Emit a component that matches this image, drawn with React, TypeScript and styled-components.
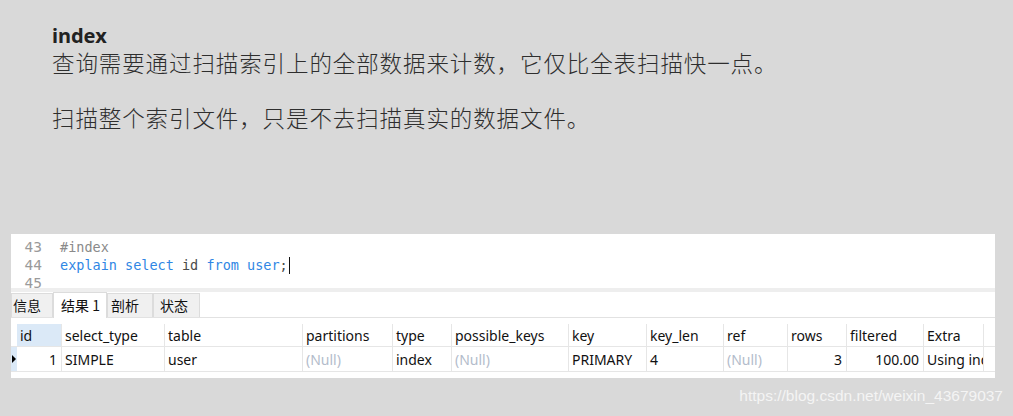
import React from "react";
import styled, { createGlobalStyle } from "styled-components";

const GlobalStyle = createGlobalStyle`
  html, body { margin: 0; padding: 0; background: #d9d9d9; }
  body { font-family: "Noto Sans", "Noto Sans CJK SC", sans-serif; }
`;

const Page = styled.div`
  width: 1013px;
  height: 416px;
  box-sizing: border-box;
  padding: 21px 0 0 11px;
  overflow: hidden;
  display: flex;
  flex-direction: column;
`;

const Article = styled.div`
  margin-left: 41px;
  color: #2b2b2b;
  font-family: "Noto Sans CJK SC", "Noto Sans", sans-serif;
`;

const Title = styled.div`
  font-family: "Noto Sans", "Noto Sans CJK SC", sans-serif;
  font-weight: 700;
  font-size: 20px;
  line-height: 24px;
  padding-top: 3px;
  color: #222;
`;

const Para = styled.div<{ $gap?: boolean }>`
  font-size: 22.5px;
  font-weight: 300;
  letter-spacing: 0.9px;
  line-height: 28px;
  height: 28px;
  white-space: nowrap;
  color: #2e2e2e;
  margin-top: ${(p) => (p.$gap ? "27px" : "0")};
`;

const Panel = styled.div`
  margin-top: 103px;
  width: 984px;
  height: 144px;
  background: #fff;
  display: flex;
  flex-direction: column;
  overflow: hidden;
`;

const Editor = styled.div`
  height: 54px;
  box-sizing: border-box;
  padding-top: 4px;
  overflow: hidden;
  display: flex;
  font-family: "DejaVu Sans Mono", "Liberation Mono", monospace;
  font-size: 13.5px;
  line-height: 18px;
`;

const Gutter = styled.div`
  width: 31px;
  text-align: right;
  color: #9a9a9a;
  font-size: 14.5px;
`;

const Code = styled.div`
  margin-left: 18px;
  white-space: pre;
  color: #444;
`;

const Tok = styled.span<{ $k: "kw" | "cm" | "id" }>`
  color: ${(p) => (p.$k === "kw" ? "#2f86e4" : p.$k === "cm" ? "#8a8a8a" : "#4a4a4a")};
`;

const Caret = styled.span`
  display: inline-block;
  width: 1px;
  height: 17px;
  background: #111;
  vertical-align: -4px;
  margin-left: 1px;
`;

const Strip = styled.div`
  height: 4px;
  background: #eeeeee;
`;

const TabBar = styled.div`
  height: 26px;
  box-sizing: border-box;
  border-bottom: 1px solid #e2e2e2;
  display: flex;
  align-items: flex-end;
  font-family: "Noto Sans CJK SC", sans-serif;
  font-size: 14px;
  color: #111;
`;

const Tab = styled.div<{ $w: number; $pl: number; $active?: boolean }>`
  width: ${(p) => p.$w}px;
  box-sizing: border-box;
  padding-left: ${(p) => p.$pl}px;
  height: ${(p) => (p.$active ? 26 : 24)}px;
  line-height: ${(p) => (p.$active ? 25 : 23)}px;
  background: ${(p) => (p.$active ? "#fff" : "#f0f0f0")};
  border: 1px solid #dcdcdc;
  border-bottom: none;
  margin-bottom: ${(p) => (p.$active ? "-1px" : "0")};
  white-space: nowrap;
`;

const Grid = styled.div`
  margin-top: 6px;
  display: flex;
  flex-direction: column;
  font-family: "Noto Sans", sans-serif;
  font-size: 14px;
  color: #111;
`;

const COLS = "6px 45px 103px 138px 90px 59px 117px 78px 77px 64px 59px 77px 60px";

const Row = styled.div<{ $h: number }>`
  display: grid;
  grid-template-columns: ${COLS};
  height: ${(p) => p.$h}px;
  border-bottom: 1px solid #e6e6e6;
`;

const Cell = styled.div<{ $right?: boolean; $null?: boolean; $sel?: boolean }>`
  box-sizing: border-box;
  border-right: 1px solid #e6e6e6;
  padding: 0 ${(p) => (p.$right ? "4px" : "2px")} 0 3px;
  text-align: ${(p) => (p.$right ? "right" : "left")};
  color: ${(p) => (p.$null ? "#b3bccb" : "#111")};
  background: ${(p) => (p.$sel ? "#dbe9f7" : "#fff")};
  white-space: nowrap;
  overflow: hidden;
  display: flex;
  align-items: center;
  justify-content: ${(p) => (p.$right ? "flex-end" : "flex-start")};
`;

const Indicator = styled.div<{ $sel?: boolean }>`
  background: ${(p) => (p.$sel ? "#dbe9f7" : "#fff")};
  display: flex;
  align-items: center;
  padding-left: 1px;
`;

const Arrow = styled.span`
  width: 0;
  height: 0;
  border-top: 4px solid transparent;
  border-bottom: 4px solid transparent;
  border-left: 4px solid #000;
`;

const Watermark = styled.div`
  display: flex;
  justify-content: flex-end;
  padding-right: 10px;
  margin-top: 9px;
  font-family: "Liberation Sans", Arial, sans-serif;
  font-size: 15.5px;
  color: #f4f4f4;
`;

const headers = [
  "id", "select_type", "table", "partitions", "type", "possible_keys",
  "key", "key_len", "ref", "rows", "filtered", "Extra",
];

type V = { t: string; r?: boolean; n?: boolean };
const data: V[] = [
  { t: "1", r: true },
  { t: "SIMPLE" },
  { t: "user" },
  { t: "(Null)", n: true },
  { t: "index" },
  { t: "(Null)", n: true },
  { t: "PRIMARY" },
  { t: "4" },
  { t: "(Null)", n: true },
  { t: "3", r: true },
  { t: "100.00", r: true },
  { t: "Using index" },
];

export default function App() {
  return (
    <>
      <GlobalStyle />
      <Page>
        <Article>
          <Title>index</Title>
          <Para>查询需要通过扫描索引上的全部数据来计数，它仅比全表扫描快一点。</Para>
          <Para $gap>扫描整个索引文件，只是不去扫描真实的数据文件。</Para>
        </Article>
        <Panel>
          <Editor>
            <Gutter>
              <div>43</div>
              <div>44</div>
              <div>45</div>
            </Gutter>
            <Code>
              <div>
                <Tok $k="cm">#index</Tok>
              </div>
              <div>
                <Tok $k="kw">explain</Tok> <Tok $k="kw">select</Tok> <Tok $k="id">id</Tok>{" "}
                <Tok $k="kw">from</Tok> <Tok $k="kw">user</Tok>
                <Tok $k="id">;</Tok>
                <Caret />
              </div>
              <div> </div>
            </Code>
          </Editor>
          <Strip />
          <TabBar>
            <Tab $w={42} $pl={1}>信息</Tab>
            <Tab $w={54} $pl={7} $active>结果 1</Tab>
            <Tab $w={46} $pl={3}>剖析</Tab>
            <Tab $w={47} $pl={6}>状态</Tab>
          </TabBar>
          <Grid>
            <Row $h={22}>
              <Indicator />
              {headers.map((h, i) => (
                <Cell key={h} $sel={i === 0}>
                  {h}
                </Cell>
              ))}
            </Row>
            <Row $h={24}>
              <Indicator $sel>
                <Arrow />
              </Indicator>
              {data.map((d, i) => (
                <Cell key={i} $right={d.r} $null={d.n}>
                  {d.t}
                </Cell>
              ))}
            </Row>
          </Grid>
        </Panel>
        <Watermark>https://blog.csdn.net/weixin_43679037</Watermark>
      </Page>
    </>
  );
}
